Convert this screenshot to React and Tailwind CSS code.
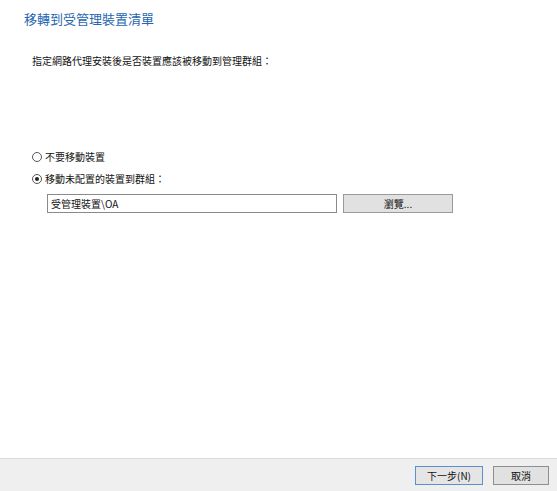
import React, { useState } from 'react';

const font = { fontFamily: '"Noto Sans CJK TC", "Noto Sans", sans-serif' };

const Radio = ({ checked, label, onClick }) => (
  <label className="flex items-center gap-[3px] cursor-default" onClick={onClick}>
    <span className="w-[10px] h-[10px] rounded-full border border-[#555] bg-white flex items-center justify-center">
      {checked && <span className="w-[4px] h-[4px] rounded-full bg-[#222]" />}
    </span>
    <span className="text-[10px] leading-none text-[#111]">{label}</span>
  </label>
);

export default function App() {
  const [choice, setChoice] = useState('move');

  return (
    <div className="w-[557px] h-[491px] bg-white flex flex-col" style={font}>
      <div className="flex-1 flex flex-col">
        {/* Header */}
        <h1 className="pl-[24px] pt-[10px] text-[13px] leading-[18px] text-[#2667b0]">
          移轉到受管理裝置清單
        </h1>

        <p className="pl-[32px] pt-[26px] text-[10px] leading-[14px] text-[#111]">
          指定網路代理安裝後是否裝置應該被移動到管理群組：
        </p>

        {/* Options */}
        <div className="pl-[32px] pt-[84px] flex flex-col gap-[12px]">
          <Radio checked={choice === 'none'} label="不要移動裝置" onClick={() => setChoice('none')} />
          <Radio checked={choice === 'move'} label="移動未配置的裝置到群組：" onClick={() => setChoice('move')} />
        </div>

        <div className="pl-[47px] pt-[10px] flex gap-[6px]">
          <div className="w-[290px] h-[19px] border border-[#8a8a8a] bg-white flex items-center px-[3px] text-[10px] text-[#111]">
            受管理裝置\OA
          </div>
          <button className="w-[110px] h-[19px] border border-[#9a9a9a] bg-[#e1e1e1] text-[10px] text-[#111] flex items-center justify-center">
            瀏覽...
          </button>
        </div>
      </div>

      {/* Footer */}
      <div className="h-[33px] border-t border-[#dcdcdc] bg-[#efefef] flex items-center justify-end gap-[10px] pr-[8px] pt-[1px]">
        <button className="w-[68px] h-[19px] border border-[#5b8fd0] bg-[#e5e5e5] text-[10px] text-[#111] flex items-center justify-center">
          下一步(N)
        </button>
        <button className="w-[56px] h-[19px] border border-[#8f8f8f] bg-[#e1e1e1] text-[10px] text-[#111] flex items-center justify-center">
          取消
        </button>
      </div>
    </div>
  );
}
